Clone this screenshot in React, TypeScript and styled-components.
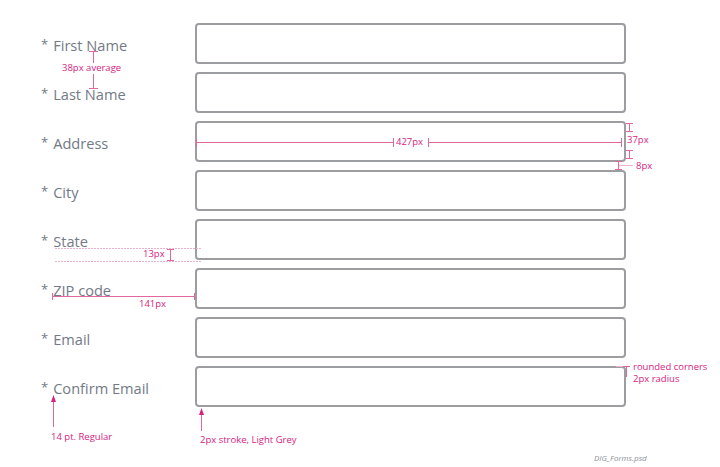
import React from 'react';
import styled, { createGlobalStyle } from 'styled-components';

const GlobalStyle = createGlobalStyle`
  html, body {
    margin: 0;
    padding: 0;
    background: #fff;
  }
  body {
    font-family: "Open Sans", "Liberation Sans", sans-serif;
  }
`;

const Page = styled.div`
  position: relative;
  width: 720px;
  height: 467px;
  overflow: hidden;
`;

const Form = styled.form`
  display: grid;
  grid-template-columns: 154px 431px;
  row-gap: 8px;
  padding: 23px 0 0 41px;
`;

const Label = styled.label`
  display: flex;
  align-items: center;
  padding-top: 3px;
  font-size: 14.6px;
  color: #737a86;
  white-space: nowrap;
`;

const Star = styled.span`
  font-size: 13px;
  margin-right: 5px;
  position: relative;
  top: -1px;
`;

const Field = styled.input`
  box-sizing: border-box;
  width: 431px;
  height: 41px;
  margin: 0;
  border: 2px solid #9b9da1;
  border-radius: 4px;
  background: #fff;
  outline: none;
`;

const Overlay = styled.svg`
  position: absolute;
  left: 0;
  top: 0;
  pointer-events: none;
`;

const Note = styled.div<{ $x: number; $y: number }>`
  position: absolute;
  left: ${p => p.$x}px;
  top: ${p => p.$y}px;
  font-size: 9.5px;
  line-height: 12px;
  color: #d6237f;
  white-space: nowrap;
`;

const FileName = styled.div`
  position: absolute;
  left: 594px;
  top: 452px;
  font-size: 8px;
  font-style: italic;
  color: #8a8f96;
`;

const fields = [
  'First Name',
  'Last Name',
  'Address',
  'City',
  'State',
  'ZIP code',
  'Email',
  'Confirm Email',
];

const pink = '#e0679f';
const pinkLight = '#eeb0cf';

export default function App() {
  return (
    <Page>
      <GlobalStyle />
      <Form>
        {fields.map(f => (
          <React.Fragment key={f}>
            <Label>
              <Star>*</Star>
              {f}
            </Label>
            <Field type="text" aria-label={f} />
          </React.Fragment>
        ))}
      </Form>

      <Overlay width={720} height={467} viewBox="0 0 720 467">
        <g stroke={pink} strokeWidth={1} fill="none" shapeRendering="crispEdges">
          {/* 38px average */}
          <line x1={93.5} y1={51} x2={93.5} y2={63} />
          <line x1={93.5} y1={74} x2={93.5} y2={89} />
          <line x1={89} y1={51.5} x2={98} y2={51.5} />
          <line x1={89} y1={88.5} x2={98} y2={88.5} />

          {/* 427px */}
          <line x1={196} y1={142.5} x2={393} y2={142.5} />
          <line x1={428} y1={142.5} x2={622} y2={142.5} />
          <line x1={196.5} y1={138} x2={196.5} y2={147} />
          <line x1={393.5} y1={138} x2={393.5} y2={147} />
          <line x1={428.5} y1={138} x2={428.5} y2={147} />
          <line x1={621.5} y1={138} x2={621.5} y2={147} />

          {/* 37px */}
          <line x1={629.5} y1={123} x2={629.5} y2={132} />
          <line x1={626} y1={123.5} x2={633} y2={123.5} />
          <line x1={626} y1={131.5} x2={633} y2={131.5} />
          <line x1={629.5} y1={150} x2={629.5} y2={159} />
          <line x1={626} y1={150.5} x2={633} y2={150.5} />
          <line x1={626} y1={158.5} x2={633} y2={158.5} />

          {/* 8px */}
          <line x1={618.5} y1={161} x2={618.5} y2={170} />
          <line x1={615} y1={161.5} x2={622} y2={161.5} />
          <line x1={615} y1={169.5} x2={622} y2={169.5} />
          <line x1={619} y1={165.5} x2={633} y2={165.5} stroke={pinkLight} />

          {/* 13px */}
          <line x1={55} y1={248.5} x2={202} y2={248.5} stroke={pinkLight} strokeDasharray="2 1" />
          <line x1={55} y1={261.5} x2={202} y2={261.5} stroke={pinkLight} strokeDasharray="2 1" />
          <line x1={170.5} y1={249} x2={170.5} y2={261} />
          <line x1={167} y1={249.5} x2={174} y2={249.5} />
          <line x1={167} y1={260.5} x2={174} y2={260.5} />

          {/* 141px */}
          <line x1={52} y1={296.5} x2={194} y2={296.5} />
          <line x1={52.5} y1={293} x2={52.5} y2={300} />
          <line x1={194.5} y1={293} x2={194.5} y2={300} />

          {/* 14 pt */}
          <line x1={53.5} y1={400} x2={53.5} y2={427} />

          {/* 2px stroke */}
          <line x1={201.5} y1={412} x2={201.5} y2={431} />

          {/* rounded corners */}
          <line x1={616} y1={366.5} x2={624} y2={366.5} stroke={pinkLight} />
          <line x1={626.5} y1={366} x2={626.5} y2={377} />
          <line x1={623} y1={366.5} x2={630} y2={366.5} />
        </g>
        <g fill="#d6237f">
          <polygon points="53.5,395 51,402 56,402" />
          <polygon points="201.5,408 199,415 204,415" />
        </g>
      </Overlay>

      <Note $x={62} $y={62}>38px average</Note>
      <Note $x={396} $y={136}>427px</Note>
      <Note $x={627} $y={134}>37px</Note>
      <Note $x={636} $y={160}>8px</Note>
      <Note $x={143} $y={248}>13px</Note>
      <Note $x={139} $y={298}>141px</Note>
      <Note $x={51} $y={431}>14 pt. Regular</Note>
      <Note $x={200} $y={434}>2px stroke, Light Grey</Note>
      <Note $x={633} $y={361}>
        rounded corners
        <br />
        2px radius
      </Note>
      <FileName>DIG_Forms.psd</FileName>
    </Page>
  );
}
